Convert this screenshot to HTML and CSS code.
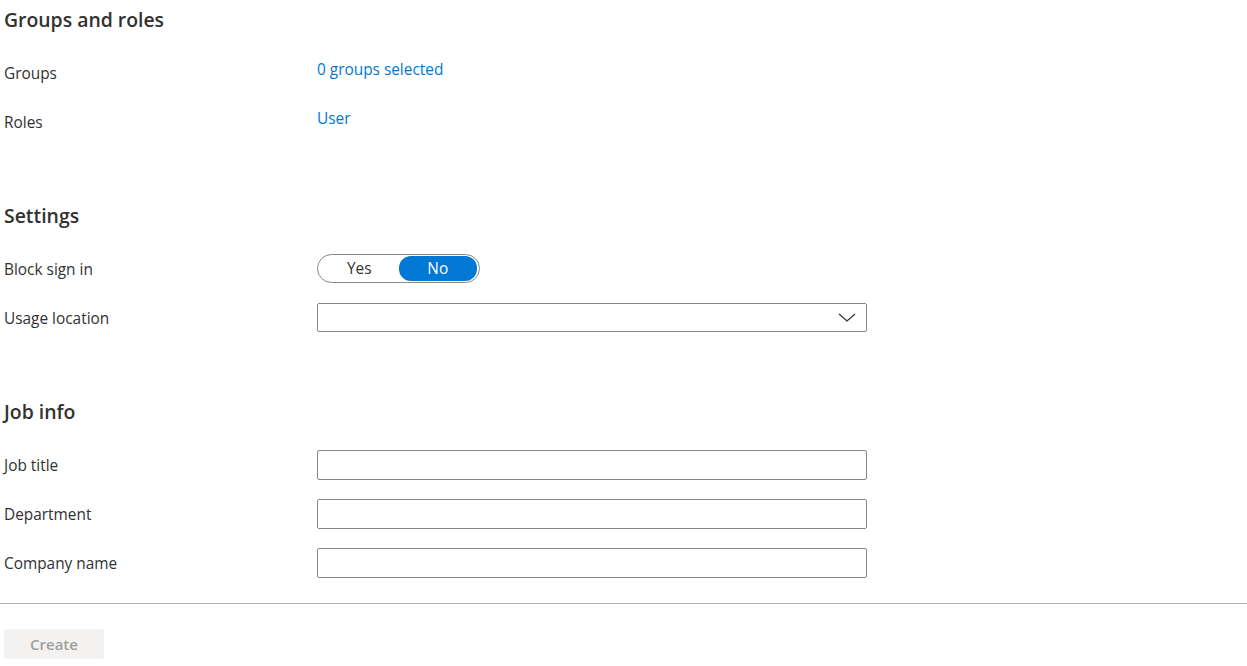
FILE: index.html
```html
<!DOCTYPE html>
<html lang="en">
<head>
    <meta charset="UTF-8">
    <meta name="viewport" content="width=device-width, initial-scale=1.0">
    <title>New user</title>
    <link rel="stylesheet" href="styles.css">
</head>
<body>
    <div class="page">
        <section class="section">
            <h2>Groups and roles</h2>
            <div class="row">
                <span class="label">Groups</span>
                <a class="link" href="#">0 groups selected</a>
            </div>
            <div class="row">
                <span class="label">Roles</span>
                <a class="link" href="#">User</a>
            </div>
        </section>

        <section class="section">
            <h2>Settings</h2>
            <div class="row">
                <span class="label">Block sign in</span>
                <div class="toggle">
                    <span class="toggle-option">Yes</span>
                    <span class="toggle-option selected">No</span>
                </div>
            </div>
            <div class="row">
                <span class="label">Usage location</span>
                <div class="dropdown">
                    <svg class="chevron" width="18" height="9" viewBox="0 0 18 9">
                        <path d="M1 1 L9 8 L17 1" fill="none" stroke="#323130" stroke-width="1.2"/>
                    </svg>
                </div>
            </div>
        </section>

        <section class="section">
            <h2>Job info</h2>
            <div class="row">
                <span class="label">Job title</span>
                <input class="text-field" type="text">
            </div>
            <div class="row">
                <span class="label">Department</span>
                <input class="text-field" type="text">
            </div>
            <div class="row">
                <span class="label">Company name</span>
                <input class="text-field" type="text">
            </div>
        </section>
    </div>

    <div class="footer">
        <button class="create-btn" disabled>Create</button>
    </div>
</body>
</html>
```

FILE: styles.css
```css
body {
    margin: 0;
    font-family: "Open Sans", "Noto Sans", sans-serif;
    font-size: 15.4px;
    color: #323130;
    background: #fff;
}

.page {
    padding: 6px 4px 0 4px;
}

/* Blocos de seção */
.section {
    margin-bottom: 46px;
}

.section:last-child {
    margin-bottom: 0;
}

.section h2 {
    margin: 0 0 24px 0;
    font-size: 19.4px;
    line-height: 28px;
    font-weight: 600;
}

/* Linhas de formulário: rótulo + campo */
.row {
    display: grid;
    grid-template-columns: 313px 550px;
    align-items: start;
    height: 49px;
}

.label {
    padding-top: 6px;
    line-height: 20px;
}

.link {
    padding-top: 2px;
    line-height: 20px;
    color: #0078d4;
    text-decoration: none;
    justify-self: start;
}

/* Botão alternado Sim / Não */
.toggle {
    display: flex;
    justify-self: start;
    width: 163px;
    height: 29px;
    box-sizing: border-box;
    padding: 1px 2px;
    border: 1px solid #8a8886;
    border-radius: 15px;
}

.toggle-option {
    flex: 1;
    display: flex;
    align-items: center;
    justify-content: center;
    border-radius: 12px;
    line-height: 20px;
}

.toggle-option.selected {
    background-color: #0078d4;
    color: #fff;
}

/* Campos */
.dropdown,
.text-field {
    width: 550px;
    height: 30px;
    box-sizing: border-box;
    border: 1px solid #8a8886;
    border-radius: 2px;
    margin: 0;
}

.dropdown {
    height: 29px;
    display: flex;
    align-items: center;
    justify-content: flex-end;
    padding-right: 10px;
}

.text-field {
    padding: 0 8px;
    font: inherit;
}

/* Rodapé */
.footer {
    margin-top: 6px;
    border-top: 1px solid #b3b0ad;
    padding: 25px 4px 0 4px;
}

.create-btn {
    width: 100px;
    height: 30px;
    border: none;
    border-radius: 2px;
    background-color: #f3f2f1;
    color: #a19f9d;
    font-family: inherit;
    font-size: 15px;
    font-weight: 600;
}
```
